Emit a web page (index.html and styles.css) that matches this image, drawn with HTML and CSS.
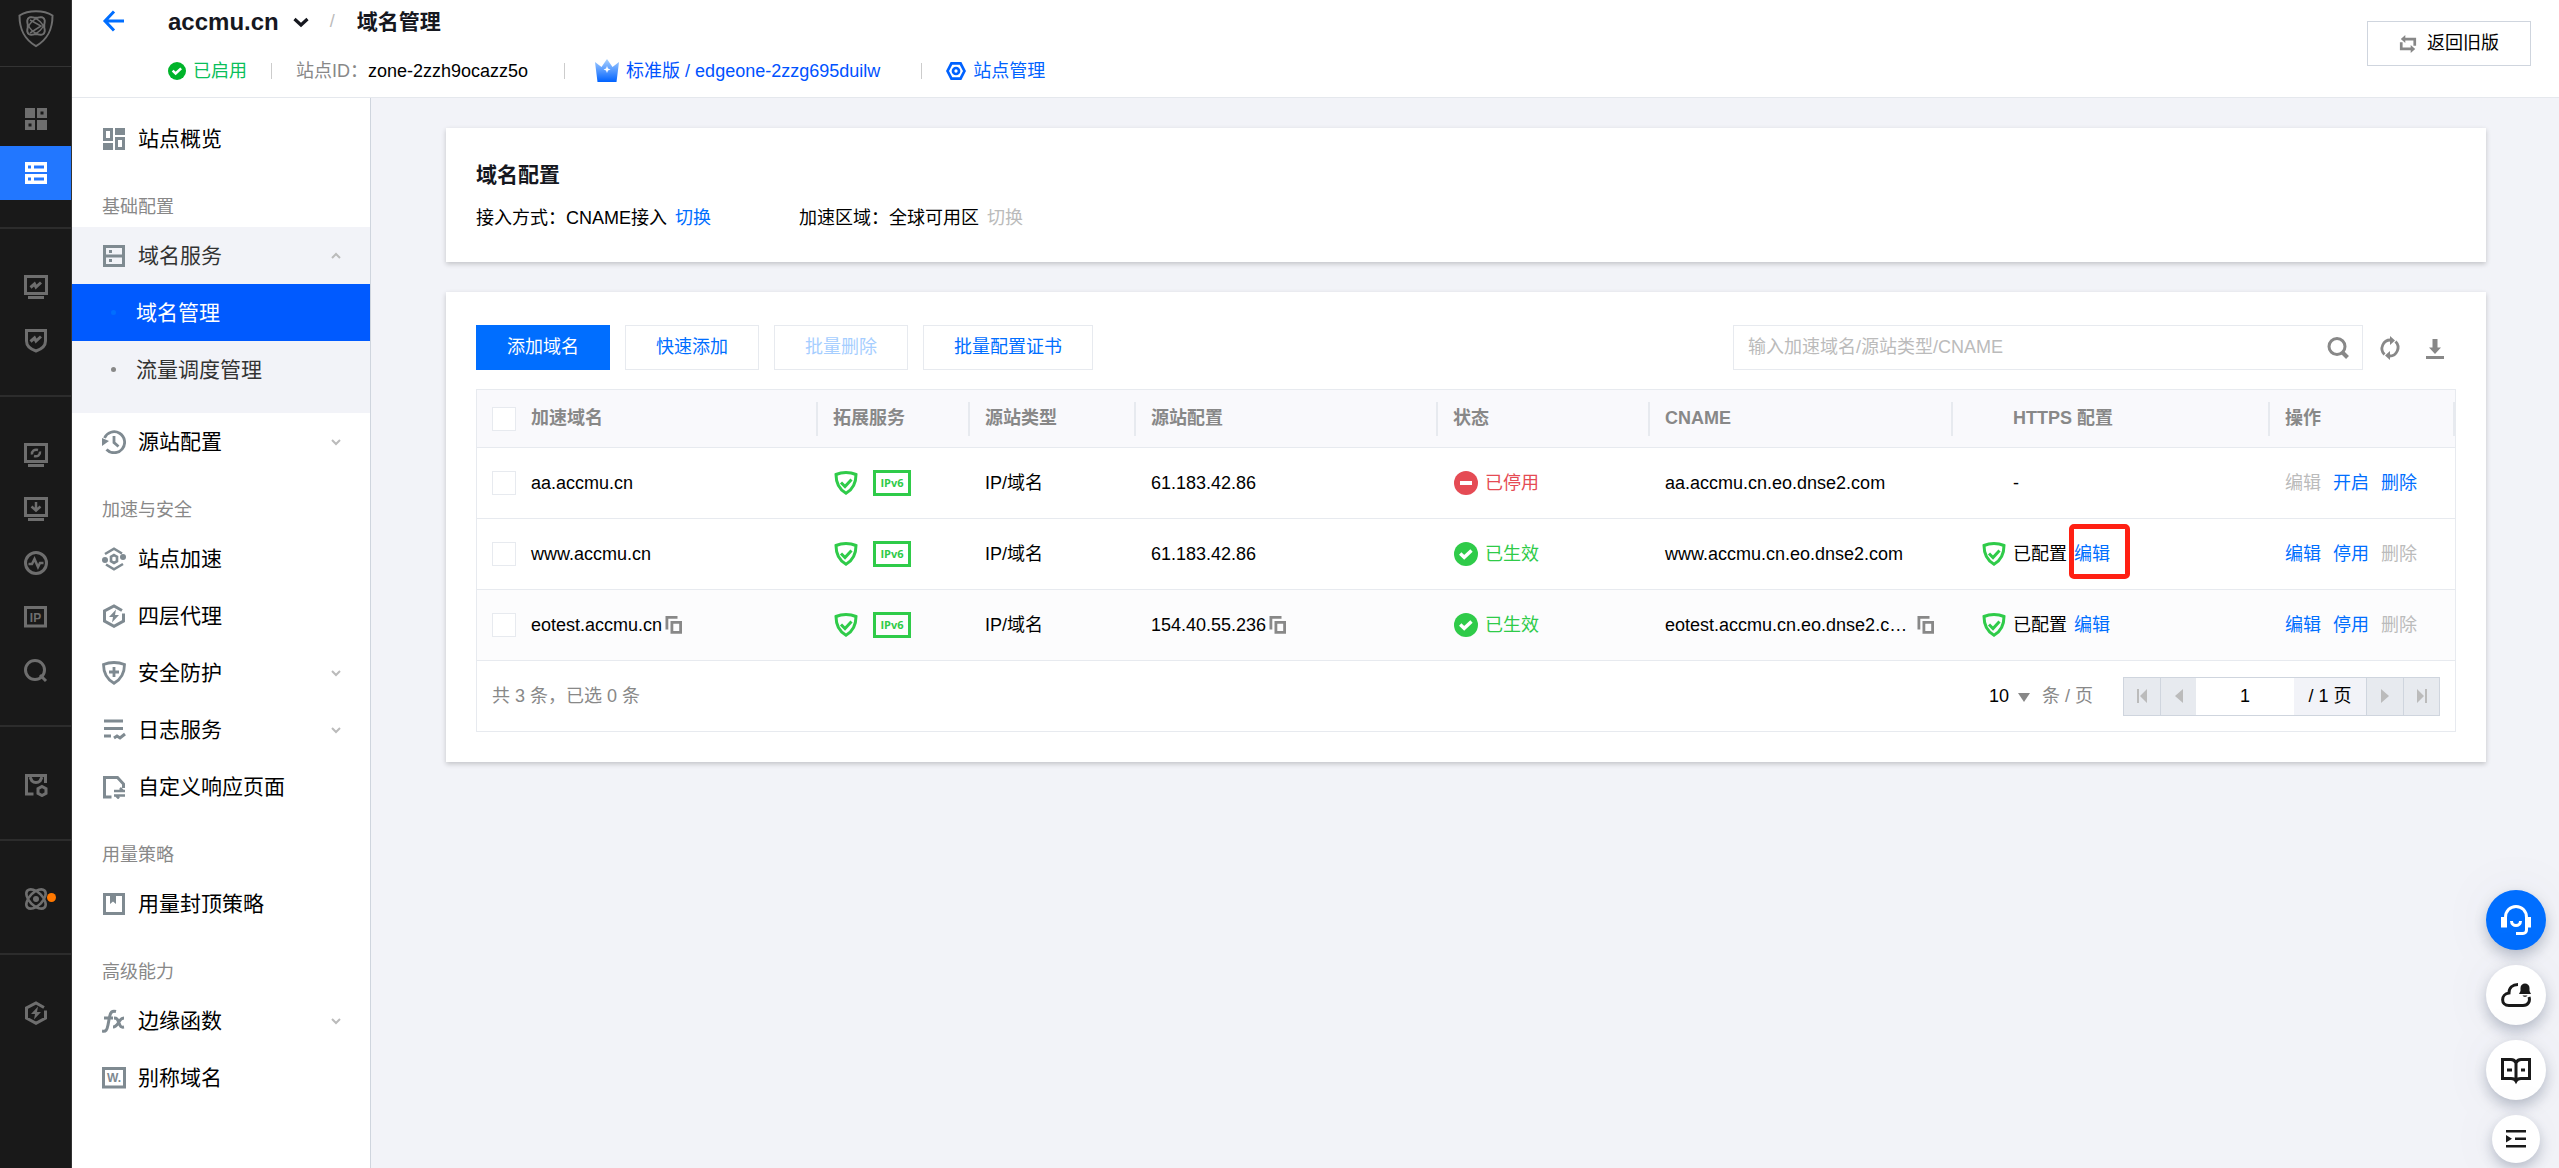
FILE: index.html
```html
<!DOCTYPE html>
<html lang="zh-CN">
<head>
<meta charset="utf-8">
<title>域名管理</title>
<link rel="stylesheet" href="styles.css">
</head>
<body>
<svg class="sprite" aria-hidden="true">
  <defs>
    <linearGradient id="crown-fill" x1="0" y1="0" x2="0" y2="1"><stop offset="0" stop-color="#a8d0ff"/><stop offset="1" stop-color="#0062ff"/></linearGradient>
    <symbol id="i-logo" viewBox="0 0 36 38"><g fill="none" stroke="currentColor"><path stroke-width="2" d="M18 1.2C12 1.2 6 2.600 1.500 5.500c0 14 4.500 23.500 16.500 30.600C30 29 34.500 19.500 34.500 5.500 30 2.600 24 1.200 18 1.200z"/><g stroke-width="1.500"><ellipse cx="18" cy="16" rx="11" ry="6" transform="rotate(45 18 16)"/><ellipse cx="18" cy="16" rx="11" ry="6" transform="rotate(-45 18 16)"/><rect x="9.500" y="7.500" width="17" height="17" rx="3"/><path d="M12 10l11 6-11 7"/></g></g></symbol>
    <symbol id="i-grid" viewBox="0 0 24 24"><path fill="currentColor" fill-rule="evenodd" d="M1 1h10v10H1zM13 1h10v10H13zM1 13h10v10H1zM13 13h10v10H13zM16.500 4.500v3h3v-3zM4.500 16.500v3h3v-3z"/></symbol>
    <symbol id="i-server" viewBox="0 0 24 24"><path fill="currentColor" fill-rule="evenodd" d="M1 1h22v10H1zM1 13h22v10H1zM4 4.500v3h3v-3zM10 4.500v3h10v-3zM4 16.500v3h3v-3zM10 16.500v3h10v-3z"/></symbol>
    <symbol id="i-monitor" viewBox="0 0 24 24"><path fill="none" stroke="currentColor" stroke-width="3" d="M1.500 1.500h21v17h-21zM4 22.500h16M6.500 12.500l4-3.500 1.500 3 5-4.500"/></symbol>
    <symbol id="i-shield-line" viewBox="0 0 24 24"><path fill="none" stroke="currentColor" stroke-width="3" d="M2.500 1.500h19V12c0 5-5 8.500-9.500 10C7.500 20.500 2.500 17 2.500 12zM6.500 12.500l4-3.500 1.500 3 5-4.500"/></symbol>
    <symbol id="i-monitor-sync" viewBox="0 0 24 24"><path fill="none" stroke="currentColor" stroke-width="3" d="M1.500 1.500h21v17h-21zM4 22.500h16"/><path fill="none" stroke="currentColor" stroke-width="2.500" d="M8 11.500c-.5-3.500 2.500-5.500 6-4.500M16 8.500c.5 3.500-2.500 5.500-6 4.500"/></symbol>
    <symbol id="i-monitor-down" viewBox="0 0 24 24"><path fill="none" stroke="currentColor" stroke-width="3" d="M1.500 1.500h21v17h-21zM4 22.500h16"/><path fill="none" stroke="currentColor" stroke-width="2.500" d="M12 5v8M7.500 9.500l4.500 4 4.500-4"/></symbol>
    <symbol id="i-pulse" viewBox="0 0 24 24"><g fill="none" stroke="currentColor"><circle cx="12" cy="12" r="10.500" stroke-width="3"/><path stroke-width="2.500" d="M4.500 13H8l2.500-5 3.500 8 2-4h3.500"/></g></symbol>
    <symbol id="i-ip" viewBox="0 0 24 24"><path fill="none" stroke="currentColor" stroke-width="3" d="M1.500 2.500h20v18.500h-20z"/><text x="11.500" y="16.500" text-anchor="middle" class="glyph-ip">IP</text></symbol>
    <symbol id="i-lens" viewBox="0 0 24 24"><g fill="none" stroke="currentColor" stroke-width="3"><circle cx="11" cy="11" r="9.500"/><path d="M16 16l6 6"/></g></symbol>
    <symbol id="i-box-gear" viewBox="0 0 24 24"><g fill="none" stroke="currentColor" stroke-width="3"><path d="M9.500 21H2.500V2.500h19V10M6 4l2 4c2 2 6 2 8 0l2-4"/><path d="M18 13.500l4 2.200v4.600l-4 2.200-4-2.200v-4.600z"/></g></symbol>
    <symbol id="i-atom" viewBox="0 0 24 24"><g fill="none" stroke="currentColor" stroke-width="2.600"><ellipse cx="12" cy="12" rx="12" ry="6.500" transform="rotate(45 12 12)"/><ellipse cx="12" cy="12" rx="12" ry="6.500" transform="rotate(-45 12 12)"/></g><circle cx="12" cy="12" r="3" fill="currentColor"/></symbol>
    <symbol id="i-bolt" viewBox="0 0 24 24"><path fill="none" stroke="currentColor" stroke-width="3" d="M20 6.500L12 2 2.500 7v10l9.500 5.300 9.500-5.300V9.500"/><path fill="currentColor" d="M14 5.500L7 13h4l-1 5.500 7-7.500h-4z"/></symbol>
    <symbol id="i-overview" viewBox="0 0 24 24"><path fill="currentColor" fill-rule="evenodd" d="M1 1h10v13H1zM4 4v7h4V4zM13 1h10v7H13zM1 16h10v7H1zM13 10h10v13H13zM16 13v7h4v-7z"/></symbol>
    <symbol id="i-rack" viewBox="0 0 24 24"><path fill="none" stroke="currentColor" stroke-width="3" d="M2.500 2.500h19v19h-19zM2.500 12h19"/><path fill="currentColor" d="M7 6h3v3H7zM7 15h3v3H7z"/></symbol>
    <symbol id="i-history" viewBox="0 0 24 24"><path fill="none" stroke="currentColor" stroke-width="2.800" d="M2.500 8A10.500 10.500 0 1 1 4.500 19.500M12 6v6.500l4.500 4"/><path fill="currentColor" d="M0 8l7 3-7 5z"/></symbol>
    <symbol id="i-accel" viewBox="0 0 24 24"><g fill="none" stroke="currentColor" stroke-width="2.600"><path d="M3 7l9-5.300L20 6.500M21 17l-9 5.300L4 17.500"/><path d="M12 8l3 1.800v4.400L12 16l-3-1.800V9.800z"/></g><circle cx="3" cy="13" r="3" fill="currentColor"/><circle cx="21" cy="10" r="3" fill="currentColor"/></symbol>
    <symbol id="i-shield-plus" viewBox="0 0 24 24"><path fill="none" stroke="currentColor" stroke-width="2.800" d="M12 1.500c-3.500 0-7.500.8-10.500 2C1.500 12 4.500 18 12 22.300 19.500 18 22.500 12 22.500 3.500c-3-1.200-7-2-10.500-2zM12 6v10M7 11h10"/></symbol>
    <symbol id="i-log" viewBox="0 0 24 24"><path fill="none" stroke="currentColor" stroke-width="3" d="M2 3h19M2 10.500h19M2 18h7M12 20l3-2 3 2 5-4"/></symbol>
    <symbol id="i-page" viewBox="0 0 24 24"><path fill="none" stroke="currentColor" stroke-width="3" d="M9.500 22H2.500V2.500h13l6 6.500V13"/><path fill="none" stroke="currentColor" stroke-width="2.500" d="M12 16h11M12 20.500h11M21 16l-3-3M14 20.500l3 3"/></symbol>
    <symbol id="i-cap" viewBox="0 0 24 24"><path fill="none" stroke="currentColor" stroke-width="3" d="M2.500 2.500h19v19h-19z"/><path fill="currentColor" d="M8 3h6v9l-3-2.500L8 12z"/></symbol>
    <symbol id="i-fx" viewBox="0 0 24 24"><path fill="none" stroke="currentColor" stroke-width="3" d="M0 22c4 1 5-1 6-6l1.500-8C8.500 3 10 1.500 14 2.500M2 9h9M12 9c3 0 3.500 1 5 5s2 4.500 5 4M22 9c-3 0-4 2-5.500 4.500S13.500 18 11 18"/></symbol>
    <symbol id="i-alias" viewBox="0 0 24 24"><path fill="none" stroke="currentColor" stroke-width="3" d="M1.500 2.500h21v18.500h-21z"/><text x="12" y="16" text-anchor="middle" class="glyph-w">W.</text></symbol>
    <symbol id="i-down" viewBox="0 0 12 12"><path fill="none" stroke="currentColor" stroke-width="2" d="M2 4l4 4 4-4"/></symbol>
    <symbol id="i-up" viewBox="0 0 12 12"><path fill="none" stroke="currentColor" stroke-width="2" d="M2 8l4-4 4 4"/></symbol>
    <symbol id="i-caret" viewBox="0 0 16 16"><path fill="none" stroke="currentColor" stroke-width="3.200" d="M1.500 5L8 11l6.500-6"/></symbol>
    <symbol id="i-back" viewBox="0 0 24 24"><path fill="none" stroke="currentColor" stroke-width="3" d="M12 2.500L3 12l9 9.500M3 12h19"/></symbol>
    <symbol id="i-ok" viewBox="0 0 24 24"><circle cx="12" cy="12" r="12" fill="currentColor"/><path fill="none" stroke="#fff" stroke-width="3.400" d="M6.200 11.500l4 3.800 7.300-6.800"/></symbol>
    <symbol id="i-stop" viewBox="0 0 24 24"><circle cx="12" cy="12" r="12" fill="currentColor"/><path fill="#fff" d="M6 10h12v4H6z"/></symbol>
    <symbol id="i-crown" viewBox="0 0 24 24"><path fill="url(#crown-fill)" d="M0 3l6.500 5L12 0l5.500 8L24 3l-2.500 20h-19z"/><path fill="#fff" d="M12 7l1 2.500 2.500 1-2.500 1-1 2.500-1-2.500-2.500-1 2.500-1z"/></symbol>
    <symbol id="i-hex" viewBox="0 0 22 22"><g fill="none" stroke="currentColor" stroke-width="3"><path d="M6 2.500h10L20.300 11 16 19.500H6L1.700 11z"/><circle cx="11" cy="11" r="3.300"/></g></symbol>
    <symbol id="i-swap" viewBox="0 0 20 20"><g fill="none" stroke="currentColor" stroke-width="3"><path d="M5 4.500h12.500V12M15 15.500H2.500V8"/></g><path fill="currentColor" d="M2 4.500L7 0v9zM18 15.500L13 11v9z"/></symbol>
    <symbol id="i-search" viewBox="0 0 24 24"><g fill="none" stroke="currentColor" stroke-width="3"><circle cx="11" cy="10.500" r="8"/><path stroke-width="4" d="M16.500 16.500l5 5"/></g></symbol>
    <symbol id="i-refresh" viewBox="0 0 24 24"><path fill="none" stroke="currentColor" stroke-width="2.800" d="M6.500 18.500A8.500 8.500 0 0 1 13 4M17.500 5.500A8.500 8.500 0 0 1 11 20"/><path fill="currentColor" d="M12 0l5 4.500L12 9zM12 24l-5-4.500L12 15z"/></symbol>
    <symbol id="i-download" viewBox="0 0 24 24"><path fill="currentColor" d="M9.500 3h5v8.500H18L12 18l-6-6.500h3.500zM3 20h18v3H3z"/></symbol>
    <symbol id="i-shield-ok" viewBox="0 0 24 24"><path fill="none" stroke="currentColor" stroke-width="3" d="M12 1.500c-3.500 0-7 .7-10 2C2 12 4.500 18 12 22.300 19.500 18 22 12 22 3.500c-3-1.300-6.500-2-10-2z"/><path fill="none" stroke="currentColor" stroke-width="3" d="M7 11.500l4 4 6.500-7"/></symbol>
    <symbol id="i-copy" viewBox="0 0 18 18"><path fill="none" stroke="currentColor" stroke-width="2.800" d="M1.900 13.500V1.400H12.500M6.900 6.400h8.700v10H6.900z"/></symbol>
    <symbol id="i-tri-down" viewBox="0 0 12 12"><path fill="currentColor" d="M0 3h12L6 12z"/></symbol>
    <symbol id="i-prev" viewBox="0 0 14 14"><path fill="currentColor" d="M11 0v14L3 7z"/></symbol>
    <symbol id="i-next" viewBox="0 0 14 14"><path fill="currentColor" d="M3 0v14l8-7z"/></symbol>
    <symbol id="i-first" viewBox="0 0 14 14"><path fill="currentColor" d="M2 0h2v14H2zM12 0v14L5 7z"/></symbol>
    <symbol id="i-last" viewBox="0 0 14 14"><path fill="currentColor" d="M10 0h2v14h-2zM2 0v14l7-7z"/></symbol>
    <symbol id="i-headset" viewBox="0 0 30 30"><g fill="none" stroke="currentColor" stroke-width="3"><path d="M4.500 22V12.500C4.500 6 9 1.500 15 1.500S25.500 6 25.500 12.500V25c0 2-1.500 3.500-3.500 3.500h-7M10.500 16c0 6 9 6 9 0"/></g><path fill="currentColor" d="M0 12h6v10.500H0zM24 12h6v10.500h-6z"/></symbol>
    <symbol id="i-cloud" viewBox="0 0 30 30"><path fill="none" stroke="currentColor" stroke-width="3" d="M17 4.600C11.500 4.600 8 8 8 13c-8.500 1-8.500 12.500 0 12.500h14c5 0 7.500-4 6-8.500"/><path fill="currentColor" d="M18 14l1.500-3V8c0-6 9-6 9 0v3l1.500 3zM21.500 15.500h5c-1 1.700-4 1.700-5 0z"/></symbol>
    <symbol id="i-book" viewBox="0 0 30 30"><path fill="none" stroke="currentColor" stroke-width="3" d="M15 26V8c-1-2.500-3-3.500-5-3.500H1.500v19H10c2.500 0 4 .5 5 2.500 1-2 2.500-2.500 5-2.500h8.500v-19H20c-2 0-4 1-5 3.500"/><path fill="currentColor" d="M6 13.500h5v3H6zM20 13.500h4v3h-4z"/></symbol>
    <symbol id="i-indent" viewBox="0 0 20 20"><path fill="currentColor" d="M0 1h20v2.500H0zM9 8.500h11V11H9zM0 16h20v2.500H0zM0 6l6 3.700-6 3.700z"/></symbol>
  </defs>
</svg>

<div class="app">
  <nav class="rail" aria-label="产品导航">
    <a class="rail-logo" href="#" aria-label="首页"><svg><use href="#i-logo"/></svg></a>
    <div class="rail-group rail-group-first">
      <a href="#" class="rail-item" aria-label="总览"><svg><use href="#i-grid"/></svg></a>
      <a href="#" class="rail-item is-active" aria-label="站点列表"><svg><use href="#i-server"/></svg></a>
    </div>
    <div class="rail-group">
      <a href="#" class="rail-item" aria-label="数据分析"><svg><use href="#i-monitor"/></svg></a>
      <a href="#" class="rail-item" aria-label="安全分析"><svg><use href="#i-shield-line"/></svg></a>
    </div>
    <div class="rail-group">
      <a href="#" class="rail-item" aria-label="缓存刷新"><svg><use href="#i-monitor-sync"/></svg></a>
      <a href="#" class="rail-item" aria-label="日志下载"><svg><use href="#i-monitor-down"/></svg></a>
      <a href="#" class="rail-item" aria-label="诊断"><svg><use href="#i-pulse"/></svg></a>
      <a href="#" class="rail-item" aria-label="IP 归属"><svg><use href="#i-ip"/></svg></a>
      <a href="#" class="rail-item" aria-label="查询"><svg><use href="#i-lens"/></svg></a>
    </div>
    <div class="rail-group"><a href="#" class="rail-item" aria-label="套餐管理"><svg><use href="#i-box-gear"/></svg></a></div>
    <div class="rail-group"><a href="#" class="rail-item" aria-label="实验室"><svg><use href="#i-atom"/></svg><span class="rail-dot"></span></a></div>
    <div class="rail-group rail-group-last"><a href="#" class="rail-item" aria-label="四层加速"><svg><use href="#i-bolt"/></svg></a></div>
  </nav>

  <div class="shell">
    <header class="header">
      <a class="back" href="#" aria-label="返回"><svg><use href="#i-back"/></svg></a>
      <div class="header-info">
        <div class="crumbs">
          <button class="site-switch" type="button">accmu.cn<svg><use href="#i-caret"/></svg></button>
          <span class="slash">/</span>
          <h1>域名管理</h1>
        </div>
        <div class="meta">
          <span class="meta-on"><svg><use href="#i-ok"/></svg>已启用</span>
          <span class="bar"></span>
          <span class="meta-zone"><span class="muted">站点ID：</span>zone-2zzh9ocazz5o</span>
          <span class="bar"></span>
          <a class="meta-plan" href="#"><svg><use href="#i-crown"/></svg>标准版 / edgeone-2zzg695duilw</a>
          <span class="bar"></span>
          <a class="meta-manage" href="#"><svg><use href="#i-hex"/></svg>站点管理</a>
        </div>
      </div>
      <button class="btn btn-legacy" type="button"><svg><use href="#i-swap"/></svg>返回旧版</button>
    </header>

    <div class="body">
      <nav class="side" aria-label="站点导航">
        <a class="side-item" href="#"><svg><use href="#i-overview"/></svg>站点概览</a>
        <h2 class="side-label">基础配置</h2>
        <div class="side-open">
          <a class="side-item" href="#"><svg><use href="#i-rack"/></svg>域名服务<svg class="chev"><use href="#i-up"/></svg></a>
          <a class="side-item side-sub is-active" href="#"><span class="dot"></span>域名管理</a>
          <a class="side-item side-sub" href="#"><span class="dot"></span>流量调度管理</a>
        </div>
        <a class="side-item" href="#"><svg><use href="#i-history"/></svg>源站配置<svg class="chev"><use href="#i-down"/></svg></a>
        <h2 class="side-label">加速与安全</h2>
        <a class="side-item" href="#"><svg><use href="#i-accel"/></svg>站点加速</a>
        <a class="side-item" href="#"><svg><use href="#i-bolt"/></svg>四层代理</a>
        <a class="side-item" href="#"><svg><use href="#i-shield-plus"/></svg>安全防护<svg class="chev"><use href="#i-down"/></svg></a>
        <a class="side-item" href="#"><svg><use href="#i-log"/></svg>日志服务<svg class="chev"><use href="#i-down"/></svg></a>
        <a class="side-item" href="#"><svg><use href="#i-page"/></svg>自定义响应页面</a>
        <h2 class="side-label">用量策略</h2>
        <a class="side-item" href="#"><svg><use href="#i-cap"/></svg>用量封顶策略</a>
        <h2 class="side-label">高级能力</h2>
        <a class="side-item" href="#"><svg><use href="#i-fx"/></svg>边缘函数<svg class="chev"><use href="#i-down"/></svg></a>
        <a class="side-item" href="#"><svg><use href="#i-alias"/></svg>别称域名</a>
      </nav>

      <main class="main">
        <section class="card summary">
          <h2>域名配置</h2>
          <div class="summary-row">
            <p>接入方式：CNAME接入<a href="#">切换</a></p>
            <p>加速区域：全球可用区<span class="off">切换</span></p>
          </div>
        </section>

        <section class="card">
          <div class="toolbar">
            <button class="btn btn-primary" type="button">添加域名</button>
            <button class="btn" type="button">快速添加</button>
            <button class="btn" type="button" disabled>批量删除</button>
            <button class="btn" type="button">批量配置证书</button>
            <div class="search">
              <input type="text" placeholder="输入加速域名/源站类型/CNAME" aria-label="搜索域名">
              <button type="button" aria-label="搜索"><svg><use href="#i-search"/></svg></button>
            </div>
            <button class="tool" type="button" aria-label="刷新"><svg><use href="#i-refresh"/></svg></button>
            <button class="tool" type="button" aria-label="下载"><svg><use href="#i-download"/></svg></button>
          </div>

          <div class="grid">
            <table>
              <colgroup><col class="c-check"><col class="c-name"><col class="c-ext"><col class="c-type"><col class="c-origin"><col class="c-status"><col class="c-cname"><col class="c-https"><col class="c-ops"></colgroup>
              <thead>
                <tr>
                  <th><div class="cell"><input type="checkbox" aria-label="全选"></div></th>
                  <th><div class="cell sep">加速域名</div></th>
                  <th><div class="cell sep">拓展服务</div></th>
                  <th><div class="cell sep">源站类型</div></th>
                  <th><div class="cell sep">源站配置</div></th>
                  <th><div class="cell sep">状态</div></th>
                  <th><div class="cell sep">CNAME</div></th>
                  <th><div class="cell sep indent">HTTPS 配置</div></th>
                  <th><div class="cell sep">操作</div></th>
                </tr>
              </thead>
              <tbody>
                <tr>
                  <td><div class="cell"><input type="checkbox" aria-label="选择 aa.accmu.cn"></div></td>
                  <td><div class="cell">aa.accmu.cn</div></td>
                  <td><div class="cell ext"><svg><use href="#i-shield-ok"/></svg><span class="v6">IPv6</span></div></td>
                  <td><div class="cell">IP/域名</div></td>
                  <td><div class="cell">61.183.42.86</div></td>
                  <td><div class="cell state state-off"><svg><use href="#i-stop"/></svg>已停用</div></td>
                  <td><div class="cell">aa.accmu.cn.eo.dnse2.com</div></td>
                  <td><div class="cell indent">-</div></td>
                  <td><div class="cell ops"><span class="off">编辑</span><a href="#">开启</a><a href="#">删除</a></div></td>
                </tr>
                <tr>
                  <td><div class="cell"><input type="checkbox" aria-label="选择 www.accmu.cn"></div></td>
                  <td><div class="cell">www.accmu.cn</div></td>
                  <td><div class="cell ext"><svg><use href="#i-shield-ok"/></svg><span class="v6">IPv6</span></div></td>
                  <td><div class="cell">IP/域名</div></td>
                  <td><div class="cell">61.183.42.86</div></td>
                  <td><div class="cell state"><svg><use href="#i-ok"/></svg>已生效</div></td>
                  <td><div class="cell">www.accmu.cn.eo.dnse2.com</div></td>
                  <td><div class="cell https"><svg><use href="#i-shield-ok"/></svg>已配置<a class="marked" href="#">编辑</a></div></td>
                  <td><div class="cell ops"><a href="#">编辑</a><a href="#">停用</a><span class="off">删除</span></div></td>
                </tr>
                <tr class="hovered">
                  <td><div class="cell"><input type="checkbox" aria-label="选择 eotest.accmu.cn"></div></td>
                  <td><div class="cell copyable">eotest.accmu.cn<button type="button" aria-label="复制"><svg><use href="#i-copy"/></svg></button></div></td>
                  <td><div class="cell ext"><svg><use href="#i-shield-ok"/></svg><span class="v6">IPv6</span></div></td>
                  <td><div class="cell">IP/域名</div></td>
                  <td><div class="cell copyable">154.40.55.236<button type="button" aria-label="复制"><svg><use href="#i-copy"/></svg></button></div></td>
                  <td><div class="cell state"><svg><use href="#i-ok"/></svg>已生效</div></td>
                  <td><div class="cell copyable cname"><span>eotest.accmu.cn.eo.dnse2.com</span><button type="button" aria-label="复制"><svg><use href="#i-copy"/></svg></button></div></td>
                  <td><div class="cell https"><svg><use href="#i-shield-ok"/></svg>已配置<a href="#">编辑</a></div></td>
                  <td><div class="cell ops"><a href="#">编辑</a><a href="#">停用</a><span class="off">删除</span></div></td>
                </tr>
              </tbody>
            </table>
            <div class="foot">
              <span class="foot-note">共 3 条，已选 0 条</span>
              <label class="size"><span class="size-pick"><select aria-label="每页条数"><option>10</option></select><svg><use href="#i-tri-down"/></svg></span>条 / 页</label>
              <div class="pager">
                <button type="button" disabled aria-label="首页"><svg><use href="#i-first"/></svg></button>
                <button type="button" disabled aria-label="上一页"><svg><use href="#i-prev"/></svg></button>
                <input type="text" value="1" aria-label="页码">
                <span>/ 1 页</span>
                <button type="button" disabled aria-label="下一页"><svg><use href="#i-next"/></svg></button>
                <button type="button" disabled aria-label="末页"><svg><use href="#i-last"/></svg></button>
              </div>
            </div>
          </div>
        </section>
      </main>
    </div>
  </div>
</div>

<aside class="floats">
  <button type="button" class="fab fab-main" aria-label="在线客服"><svg><use href="#i-headset"/></svg></button>
  <button type="button" class="fab" aria-label="消息"><svg><use href="#i-cloud"/></svg></button>
  <button type="button" class="fab" aria-label="文档"><svg><use href="#i-book"/></svg></button>
  <button type="button" class="fab fab-small" aria-label="收起"><svg><use href="#i-indent"/></svg></button>
</aside>
</body>
</html>
```

FILE: styles.css
```css
*, *::after { box-sizing: border-box; }

body {
  margin: 0;
  font: 18px/27px "Liberation Sans", "Noto Sans CJK SC", sans-serif;
  color: #000;
  background: #f2f3f8;
}

h1, h2, p { margin: 0; font-weight: inherit; }
a { color: #006eff; text-decoration: none; }
button, input, select { font: inherit; color: inherit; }
button { padding: 0; border: 0; background: none; cursor: pointer; }
svg { display: block; flex: none; width: 24px; height: 24px; }
.sprite { position: absolute; width: 0; height: 0; }
.glyph-ip, .glyph-w { font: bold 12px "Liberation Sans", sans-serif; fill: currentColor; }
.muted { color: #888; }
.off { color: #bbb; }

.app { display: flex; min-height: 100vh; }

/* product rail */
.rail { flex: none; width: 72px; background: #191919; border-right: 1px solid #333; }
.rail-logo { display: flex; justify-content: center; padding: 10px 0 18px; color: #6e6e6e; border-bottom: 1px solid #333; }
.rail-logo svg { width: 36px; height: 38px; }
.rail-group { padding: 31px 0 27px; border-bottom: 2px solid #2c2c2c; }
.rail-group-first { padding-top: 25px; }
.rail-group-last { border-bottom: 0; }
.rail-item { position: relative; display: flex; align-items: center; justify-content: center; height: 54px; color: #6e6e6e; }
.rail-item.is-active { color: #fff; background: #2277ff; }
.rail-dot { position: absolute; top: 21px; right: 15px; width: 9px; height: 9px; border-radius: 50%; background: #ff7800; }

.shell { flex: 1; min-width: 0; display: flex; flex-direction: column; }

/* page header */
.header { display: flex; align-items: flex-start; padding: 0 28px 0 30px; background: #fff; border-bottom: 1px solid #e5e8ed; }
.back { margin-right: 42px; padding-top: 9px; }
.header-info { flex: 1; }
.crumbs { display: flex; align-items: center; height: 43px; color: #16181f; }
.site-switch { display: flex; align-items: center; gap: 14px; font-size: 24px; font-weight: bold; }
.site-switch svg { width: 16px; height: 16px; }
.slash { margin: 0 22px 0 21px; color: #bbb; }
.crumbs h1 { font-size: 21px; font-weight: bold; }
.meta { display: flex; align-items: center; height: 54px; padding-top: 2px; }
.meta > a, .meta-on { display: flex; align-items: center; gap: 7px; }
.meta-on { color: #0abf5b; }
.meta-on svg { width: 18px; height: 18px; color: #00b42a; }
.bar { width: 1px; height: 16px; margin: 0 24px; background: #ccc; }
.meta-zone { margin-right: 12px; }
.meta-plan { margin: 0 17px 0 6px; color: #0052ff; }
.meta-manage { color: #0062ff; }
.meta-manage svg { width: 20px; height: 20px; }

/* buttons */
.btn { display: inline-flex; align-items: center; justify-content: center; height: 45px; padding: 0 30px; border: 1px solid #e7eaef; color: #006eff; background: #fff; }
.btn:disabled { color: #a6ceff; }
.btn-primary { color: #fff; background: #006eff; border-color: #006eff; }
.btn-legacy { gap: 10px; margin-top: 21px; padding: 0 31px; color: #000; border-color: #cfd5de; }
.btn-legacy svg { width: 18px; height: 20px; color: #888; }

.body { flex: 1; display: flex; }

/* site navigation */
.side { flex: none; width: 299px; padding: 12px 0; background: #fff; border-right: 1px solid #cfd5de; }
.side-item { display: flex; align-items: center; gap: 12px; height: 57px; padding: 0 28px 0 30px; font-size: 21px; color: #000; }
.side-item svg { color: #7f8a91; }
.side-item .chev { width: 12px; height: 12px; margin-left: auto; color: #bbb; }
.side-label { height: 60px; padding: 27px 30px 0; font-size: 18px; color: #888; }
.side-open { padding-bottom: 15px; background: #f2f3f8; }
.side-open .side-item { color: #333; }
.side-sub { gap: 20px; padding-left: 39px; }
.dot { width: 5px; height: 5px; border-radius: 50%; background: #888; }
.side-open .side-sub.is-active { color: #fff; background: #005aff; }
.is-active .dot { background: #006eff; }

/* content */
.main { flex: 1; min-width: 0; padding: 30px 73px 30px 75px; }
.card { padding: 33px 30px 30px; background: #fff; box-shadow: 0 2px 5px rgba(0, 0, 0, .2); }
.card + .card { margin-top: 30px; }
.summary { padding-top: 32px; }
.summary h2 { font-size: 21px; font-weight: bold; color: #16181f; line-height: 30px; }
.summary-row { display: flex; gap: 88px; padding-top: 15px; }
.summary-row a, .summary-row span { margin-left: 8px; }

.toolbar { display: flex; gap: 15px; align-items: center; margin-bottom: 19px; }
.search { display: flex; flex: 0 1 630px; height: 45px; margin-left: auto; border: 1px solid #e7eaef; }
.search input { flex: 1; min-width: 0; padding: 0 14px; border: 0; outline: 0; background: none; }
.search input::placeholder { color: #bbb; }
.search button { padding-right: 12px; }
.search svg, .tool svg { color: #888; }
.tool { display: flex; justify-content: center; width: 24px; }
.tool:last-child { margin-left: 6px; margin-right: 9px; }

.grid { border: 1px solid #e7eaef; }
table { width: 100%; table-layout: fixed; border-collapse: separate; border-spacing: 0; }
.c-check { width: 39px; }
.c-name { width: 302px; }
.c-ext { width: 152px; }
.c-type { width: 166px; }
.c-origin { width: 302px; }
.c-status { width: 212px; }
.c-cname { width: 303px; }
.c-https { width: 317px; }
.c-ops { width: 185px; }
th, td { padding: 0; text-align: left; border-bottom: 1px solid #e7eaef; }
th { height: 58px; font-weight: bold; color: #888; background: #f9f9fc; }
td { height: 71px; }
.hovered td { background: #fcfcfd; }
.cell { display: flex; align-items: center; height: 34px; padding-left: 15px; white-space: nowrap; }
.sep { border-right: 2px solid #e7eaef; }
.cell.indent { padding-left: 60px; }
input[type="checkbox"] { appearance: none; flex: none; width: 24px; height: 24px; margin: 0; border: 1px solid #e7eaef; background: #fff; }
.ext { gap: 15px; padding-left: 16px; color: #2fcb49; }
.v6 { width: 38px; height: 26px; border: 3px solid #2fcb49; font: bold 11px/20px "Open Sans", sans-serif; text-align: center; }
.state { gap: 7px; padding-left: 16px; color: #2fcb49; }
.state-off { color: #e54b54; }
.copyable { gap: 3px; }
.copyable svg { width: 18px; height: 18px; color: #888; }
.cname { gap: 9px; padding-right: 18px; }
.cname span { overflow: hidden; text-overflow: ellipsis; }
.cell.https { gap: 7px; padding-left: 29px; }
.https svg { color: #2fcb49; }
.ops { gap: 12px; }
.marked { position: relative; }
.marked::after { content: ""; position: absolute; left: -5px; top: -17px; width: 61px; height: 55px; border: 5px solid #ff2013; border-radius: 5px; }

.foot { display: flex; align-items: center; height: 70px; padding: 0 15px; }
.foot-note { flex: 1; color: #888; }
.size { display: flex; align-items: center; gap: 12px; margin-right: 30px; color: #888; }
.size-pick { display: flex; align-items: center; gap: 9px; color: #000; }
.size-pick select { appearance: none; width: 20px; padding: 0; border: 0; background: none; }
.size-pick svg { width: 12px; height: 12px; color: #888; }
.pager { display: flex; height: 39px; background: #e7eaef; border: 1px solid #cfd5de; }
.pager button { display: flex; align-items: center; justify-content: center; width: 36px; color: #bbb; }
.pager button + button { border-left: 1px solid #cfd5de; }
.pager svg { width: 14px; height: 14px; }
.pager input { width: 98px; padding: 0; border: 0; text-align: center; background: #fff; }
.pager span { width: 73px; line-height: 37px; text-align: center; background: #f2f3f8; border-right: 1px solid #cfd5de; }

/* floating helpers over the page */
.floats { position: fixed; right: 13px; bottom: 5px; display: flex; flex-direction: column; align-items: center; gap: 15px; }
.fab { display: flex; align-items: center; justify-content: center; width: 60px; height: 60px; border-radius: 50%; color: #191919; background: #fff; box-shadow: 0 6px 14px rgba(54, 68, 100, .3), 0 0 60px rgba(54, 68, 100, .06); }
.fab svg { width: 30px; height: 30px; }
.fab-main { color: #fff; background: #006eff; }
.fab-small { width: 48px; height: 48px; }
.fab-small svg { width: 20px; height: 20px; }
```
